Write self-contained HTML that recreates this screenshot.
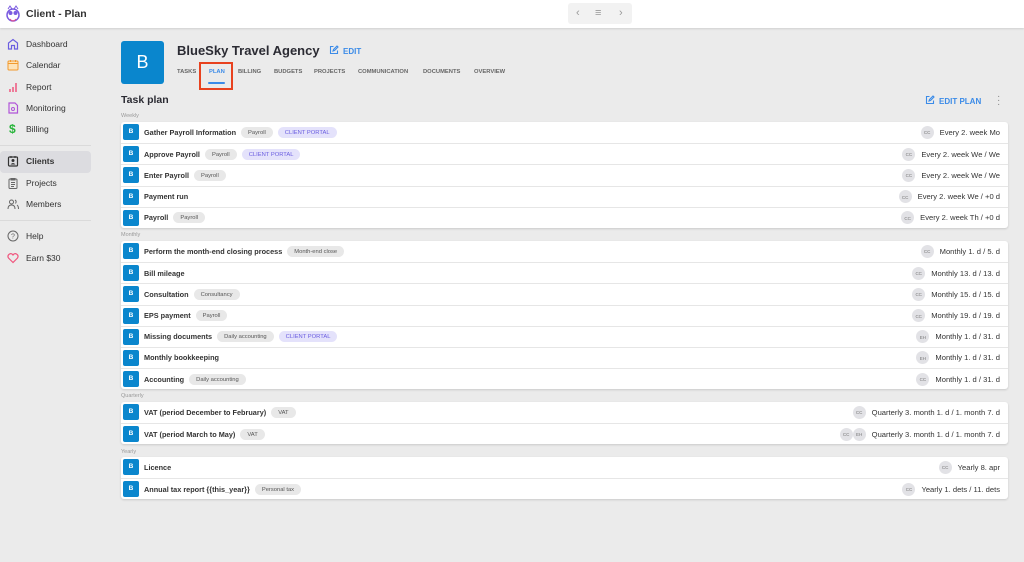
<!DOCTYPE html>
<html><head><meta charset="utf-8"><style>
*{box-sizing:border-box;margin:0;padding:0}
body{width:1024px;height:562px;overflow:hidden;background:#ebebeb;font-family:"Liberation Sans",sans-serif;color:#2b2b33;position:relative}
.top{position:absolute;left:0;top:0;width:1024px;height:28px;background:#fff;box-shadow:0 1px 2px rgba(0,0,0,.12)}
.top .t{position:absolute;left:26px;top:8px;font-size:10.5px;font-weight:bold;color:#333}
.nav{position:absolute;left:568px;top:3px;width:64px;height:21px;background:#f2f2f2;border-radius:3px;color:#999;font-size:11px}
.side{position:absolute;left:0;top:34px;width:100px}
.si{position:relative;height:21.3px;font-size:8.5px;color:#333;padding-left:26px;line-height:21px}
.si svg{position:absolute;left:7px;top:4px}
.si.act{background:#dcdce0;border-radius:4px;font-weight:bold;margin-right:9px}
.sep{height:1px;background:#dadada;margin:5px 9px 5px 0}
.logo{position:absolute;left:121px;top:41px;width:43px;height:43px;background:#0a86cd;border-radius:3px;color:#fff;font-size:18px;text-align:center;line-height:43px}
.h1{position:absolute;left:177px;top:43px;font-size:13px;font-weight:bold;color:#2b2b33}
.edit{position:absolute;left:329px;top:45px;font-size:8px;color:#3b8be8;font-weight:bold}
.tabs{position:absolute;left:177px;top:69px;font-size:5.8px;color:#666;font-weight:bold}
.tabs span{position:absolute;white-space:nowrap}
.hl{position:absolute;left:199px;top:62px;width:34px;height:28px;border:2px solid #e8421f}
.ul{position:absolute;left:208px;top:82px;width:17px;height:2px;background:#3b8be8;border-radius:1px}
.tp{position:absolute;left:121px;top:94px;font-size:10.5px;font-weight:bold}
.ep{position:absolute;left:925px;top:95px;font-size:8px;color:#3b8be8;font-weight:bold}
.dots{position:absolute;left:997px;top:95px;color:#888;font-size:10px;line-height:4px;width:4px}
.lab{position:absolute;left:121px;font-size:5.5px;color:#999}
.card{position:absolute;left:121px;width:887px;background:#fff;border-radius:3px;box-shadow:0 1px 2px rgba(0,0,0,.15)}
.row{position:relative;height:21.2px;border-top:1px solid #e6e6e6;font-size:7.3px;font-weight:bold;color:#333}
.row:first-child{border-top:none}
.b{position:absolute;left:2px;top:2px;width:16px;height:16px;background:#0a86cd;color:#fff;border-radius:2px;font-size:6.5px;text-align:center;line-height:16px}
.n{position:absolute;left:23px;top:0;height:20px;display:flex;align-items:center;white-space:nowrap}
.tg{display:block;position:relative;height:11px;background:#e8e8e8;border-radius:6px;margin-left:5px;color:transparent;font-weight:normal;font-size:5.8px;line-height:11px;padding:0 7px}
.tg i{position:absolute;left:7px;top:3px;font-style:normal;color:#555;line-height:6px}
.tg.p{background:#e4e2fb}.tg.p i{color:#6a5de0}
.r{position:absolute;right:8px;top:0;height:20px;display:flex;align-items:center;font-weight:normal;font-size:7.6px;white-space:nowrap;color:#333}
.av{display:block;position:relative;width:13px;height:13px;border-radius:7px;background:#e2e2e6;margin-right:6px}
.av i{position:absolute;left:0;width:13px;top:4.5px;text-align:center;font-style:normal;color:#777;font-size:4.5px;line-height:5px}
</style></head><body>
<div class="top">
<svg style="position:absolute;left:6px;top:5px" width="14" height="18" viewBox="0 0 14 18"><circle cx="7" cy="10" r="6" fill="none" stroke="#7b5ce0" stroke-width="1.5"/><circle cx="4.5" cy="8" r="2" fill="#7b5ce0"/><circle cx="9.5" cy="8" r="2" fill="#7b5ce0"/><path d="M2 4 L4 1 L6 4 M8 4 L10 1 L12 4" stroke="#7b5ce0" fill="none"/><path d="M4 14 Q7 18 10 14" stroke="#e24a8a" fill="none"/></svg>
<div class="t">Client - Plan</div>
<div class="nav"><span style="position:absolute;left:8px;top:4px">‹</span><span style="position:absolute;left:27px;top:4px">≡</span><span style="position:absolute;left:51px;top:4px">›</span></div>
</div>
<div class="side">
<div class="si"><svg width="12" height="12" viewBox="0 0 12 12"><path d="M1.5 11V5L6 1.5 10.5 5V11H7.5V7.5H4.5V11Z" fill="none" stroke="#6a5de0" stroke-width="1.2"/></svg>Dashboard</div>
<div class="si"><svg width="12" height="12" viewBox="0 0 12 12"><rect x="1" y="2" width="10" height="9" rx="1" fill="#fde3b8" stroke="#f29a2e"/><path d="M1 4.5H11M3.5 1V3M8.5 1V3" stroke="#f29a2e"/></svg>Calendar</div>
<div class="si"><svg width="12" height="12" viewBox="0 0 12 12"><path d="M3 11V8M6 11V6M9 11V2" stroke="#f0567e" stroke-width="1.5"/></svg>Report</div>
<div class="si"><svg width="12" height="12" viewBox="0 0 12 12"><path d="M2 1H8L10.5 3.5V11H2Z" fill="none" stroke="#b055d8" stroke-width="1.2"/><circle cx="6" cy="7" r="1.5" fill="none" stroke="#b055d8"/></svg>Monitoring</div>
<div class="si"><span style="position:absolute;left:9px;top:0;color:#27b43a;font-size:12px;font-weight:bold">$</span>Billing</div>
<div class="sep"></div>
<div class="si act"><svg width="12" height="12" viewBox="0 0 12 12"><rect x="1.5" y="2" width="9" height="9" rx="1" fill="none" stroke="#333" stroke-width="1.2"/><circle cx="6" cy="5.5" r="1.5" fill="#333"/><path d="M3.5 9.5Q6 6.5 8.5 9.5" fill="#333"/><path d="M4 1V3M8 1V3" stroke="#333"/></svg>Clients</div>
<div class="si"><svg width="12" height="12" viewBox="0 0 12 12"><rect x="2" y="2" width="8" height="9.5" rx="1" fill="none" stroke="#666"/><path d="M4 1.5H8V3H4Z M4 5.5H8M4 7.5H8M4 9.5H7" stroke="#666" fill="none"/></svg>Projects</div>
<div class="si"><svg width="12" height="12" viewBox="0 0 12 12"><circle cx="4.5" cy="4" r="2" fill="none" stroke="#666"/><path d="M1 11Q1 7 4.5 7Q8 7 8 11M8 2Q10 3 8.5 5.5M10 7Q11.5 8 11.5 11" fill="none" stroke="#666"/></svg>Members</div>
<div class="sep"></div>
<div class="si"><svg width="12" height="12" viewBox="0 0 12 12"><circle cx="6" cy="6" r="5" fill="none" stroke="#666"/><text x="6" y="8.5" font-size="7" text-anchor="middle" fill="#666" font-family="Liberation Sans">?</text></svg>Help</div>
<div class="si"><svg width="12" height="12" viewBox="0 0 12 12"><path d="M6 10.5L1.5 6Q0 3.5 2.5 2Q4.5 1 6 3Q7.5 1 9.5 2Q12 3.5 10.5 6Z" fill="none" stroke="#f0567e" stroke-width="1.2"/></svg>Earn $30</div>
</div>
<div class="logo">B</div>
<div class="h1">BlueSky Travel Agency</div>
<div class="edit"><svg width="10" height="10" viewBox="0 0 10 10" style="vertical-align:-1px;margin-right:4px"><path d="M4.5 1.5H1.5V8.5H8.5V5.5M4 6L4.5 4.5L8 1L9 2L5.5 5.5Z" fill="none" stroke="#3b8be8" stroke-width="1.1"/></svg>EDIT</div>
<div class="tabs"><span style="left:0">TASKS</span><span style="left:32px;color:#3b8be8">PLAN</span><span style="left:61px">BILLING</span><span style="left:97px">BUDGETS</span><span style="left:137px">PROJECTS</span><span style="left:181px">COMMUNICATION</span><span style="left:246px">DOCUMENTS</span><span style="left:297px">OVERVIEW</span></div>
<div class="hl"></div><div class="ul"></div>
<div class="tp">Task plan</div>
<div class="ep"><svg width="10" height="10" viewBox="0 0 10 10" style="vertical-align:-1px;margin-right:4px"><path d="M4.5 1.5H1.5V8.5H8.5V5.5M4 6L4.5 4.5L8 1L9 2L5.5 5.5Z" fill="none" stroke="#3b8be8" stroke-width="1.1"/></svg>EDIT PLAN</div>
<div class="dots">·<br>·<br>·</div>

<div class="lab" style="top:113px">Weekly</div>
<div class="card" style="top:122px">
<div class="row"><div class="b">B</div><div class="n">Gather Payroll Information<span class="tg"><i>Payroll</i>Payroll</span><span class="tg p"><i>CLIENT PORTAL</i>CLIENT PORTAL</span></div><div class="r"><span class="av"><i>CC</i></span>Every 2. week Mo</div></div>
<div class="row"><div class="b">B</div><div class="n">Approve Payroll<span class="tg"><i>Payroll</i>Payroll</span><span class="tg p"><i>CLIENT PORTAL</i>CLIENT PORTAL</span></div><div class="r"><span class="av"><i>CC</i></span>Every 2. week We / We</div></div>
<div class="row"><div class="b">B</div><div class="n">Enter Payroll<span class="tg"><i>Payroll</i>Payroll</span></div><div class="r"><span class="av"><i>CC</i></span>Every 2. week We / We</div></div>
<div class="row"><div class="b">B</div><div class="n">Payment run</div><div class="r"><span class="av"><i>CC</i></span>Every 2. week We / +0 d</div></div>
<div class="row"><div class="b">B</div><div class="n">Payroll<span class="tg"><i>Payroll</i>Payroll</span></div><div class="r"><span class="av"><i>CC</i></span>Every 2. week Th / +0 d</div></div>
</div>
<div class="lab" style="top:232px">Monthly</div>
<div class="card" style="top:241px">
<div class="row"><div class="b">B</div><div class="n">Perform the month-end closing process<span class="tg"><i>Month-end close</i>Month-end close</span></div><div class="r"><span class="av"><i>CC</i></span>Monthly 1. d / 5. d</div></div>
<div class="row"><div class="b">B</div><div class="n">Bill mileage</div><div class="r"><span class="av"><i>CC</i></span>Monthly 13. d / 13. d</div></div>
<div class="row"><div class="b">B</div><div class="n">Consultation<span class="tg"><i>Consultancy</i>Consultancy</span></div><div class="r"><span class="av"><i>CC</i></span>Monthly 15. d / 15. d</div></div>
<div class="row"><div class="b">B</div><div class="n">EPS payment<span class="tg"><i>Payroll</i>Payroll</span></div><div class="r"><span class="av"><i>CC</i></span>Monthly 19. d / 19. d</div></div>
<div class="row"><div class="b">B</div><div class="n">Missing documents<span class="tg"><i>Daily accounting</i>Daily accounting</span><span class="tg p"><i>CLIENT PORTAL</i>CLIENT PORTAL</span></div><div class="r"><span class="av"><i>EH</i></span>Monthly 1. d / 31. d</div></div>
<div class="row"><div class="b">B</div><div class="n">Monthly bookkeeping</div><div class="r"><span class="av"><i>EH</i></span>Monthly 1. d / 31. d</div></div>
<div class="row"><div class="b">B</div><div class="n">Accounting<span class="tg"><i>Daily accounting</i>Daily accounting</span></div><div class="r"><span class="av"><i>CC</i></span>Monthly 1. d / 31. d</div></div>
</div>
<div class="lab" style="top:393px">Quarterly</div>
<div class="card" style="top:402px">
<div class="row"><div class="b">B</div><div class="n">VAT (period December to February)<span class="tg"><i>VAT</i>VAT</span></div><div class="r"><span class="av"><i>CC</i></span>Quarterly 3. month 1. d / 1. month 7. d</div></div>
<div class="row"><div class="b">B</div><div class="n">VAT (period March to May)<span class="tg"><i>VAT</i>VAT</span></div><div class="r"><span class="av" style="margin-right:0"><i>CC</i></span><span class="av"><i>EH</i></span>Quarterly 3. month 1. d / 1. month 7. d</div></div>
</div>
<div class="lab" style="top:449px">Yearly</div>
<div class="card" style="top:457px">
<div class="row"><div class="b">B</div><div class="n">Licence</div><div class="r"><span class="av"><i>CC</i></span>Yearly 8. apr</div></div>
<div class="row"><div class="b">B</div><div class="n">Annual tax report {{this_year}}<span class="tg"><i>Personal tax</i>Personal tax</span></div><div class="r"><span class="av"><i>CC</i></span>Yearly 1. dets / 11. dets</div></div>
</div>
</body></html>
